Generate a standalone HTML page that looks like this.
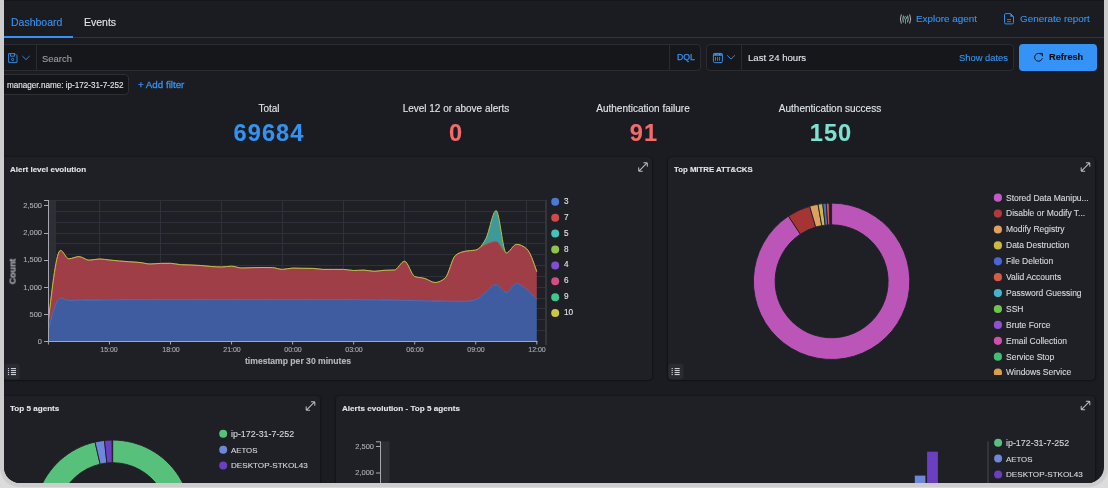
<!DOCTYPE html><html><head><meta charset="utf-8"><style>
html,body{margin:0;padding:0;}
body{width:1108px;height:488px;overflow:hidden;background:#dcdcdc;position:relative;font-family:"Liberation Sans", sans-serif;}
.t{position:absolute;white-space:nowrap;will-change:transform;-webkit-text-stroke:0.12px currentColor;}
.r{position:absolute;}
svg{position:absolute;left:0;top:0;overflow:visible;}
</style></head><body>
<div class="r" style="left:0;top:-20px;width:1108px;height:507px;background:#cdcdcd;border-radius:0 0 19px 19px;"></div>
<div style="position:absolute;left:4px;top:0;width:1100px;height:483px;background:#1b1c21;border-radius:0 0 16px 16px;overflow:hidden;">
<div style="position:absolute;left:-4px;top:0;width:1108px;height:488px;">
<div class="r" style="left:0px;top:0px;width:1108px;height:1px;background:#141519;"></div>
<div class="t" style="left:10.90px;top:17.11px;font-size:10.5px;line-height:10.5px;color:#3592f0;font-weight:400;">Dashboard</div>
<div class="t" style="left:84.00px;top:17.11px;font-size:10.5px;line-height:10.5px;color:#dfe3ea;font-weight:400;">Events</div>
<div class="r" style="left:0px;top:37px;width:1108px;height:1px;background:#34353c;"></div>
<div class="r" style="left:0px;top:36px;width:73px;height:2px;background:#3592f0;"></div>
<svg width="1108" height="488" viewBox="0 0 1108 488">
<g fill="none" stroke-linecap="round">
<path d="M901.2,14.8 Q899.3,19 901.2,23.2 M903.3,16 Q902.2,19 903.3,22 M909.8,14.8 Q911.7,19 909.8,23.2 M907.7,16 Q908.8,19 907.7,22" stroke="#c0c3ca" stroke-width="0.9"/>
<circle cx="905.5" cy="17.9" r="1.3" stroke="#54b399" stroke-width="0.9"/>
<path d="M905.5,19.3 V23.4" stroke="#54b399" stroke-width="0.9"/>
</g>
<g fill="none" stroke="#3592f0" stroke-width="0.95" stroke-linejoin="round">
<path d="M1005.8,13.6 H1010.6 L1013.5,16.5 V22.6 Q1013.5,23.9 1012.2,23.9 H1005.8 Q1004.5,23.9 1004.5,22.6 V14.9 Q1004.5,13.6 1005.8,13.6 Z"/>
</g>
<path d="M1010.4,13.3 L1013.8,16.7 H1010.4 Z" fill="#3592f0"/>
<path d="M1007,19.5 H1011 M1007,21.6 H1011" stroke="#3592f0" stroke-width="0.8"/>
</svg>
<div class="t" style="left:916.20px;top:14.42px;font-size:9.9px;line-height:9.9px;color:#3592f0;font-weight:400;">Explore agent</div>
<div class="t" style="left:1020.00px;top:14.42px;font-size:9.9px;line-height:9.9px;color:#3592f0;font-weight:400;">Generate report</div>
<div class="r" style="left:-6px;top:44px;width:707px;height:27px;background:#16171b;border:1px solid #2b2c32;border-radius:4px;box-sizing:border-box;"></div>
<div class="r" style="left:36px;top:45px;width:1px;height:25px;background:#2b2c32;"></div>
<div class="r" style="left:669px;top:45px;width:1px;height:25px;background:#2b2c32;"></div>
<div class="r" style="left:706px;top:44px;width:308px;height:27px;background:#16171b;border:1px solid #2b2c32;border-radius:4px;box-sizing:border-box;"></div>
<div class="r" style="left:741px;top:45px;width:1px;height:25px;background:#2b2c32;"></div>
<svg width="1108" height="488" viewBox="0 0 1108 488">
<g fill="none" stroke="#3592f0" stroke-width="0.9" stroke-linejoin="round">
<path d="M8.6,53.6 H15 L17,55.6 V62.4 H8.6 Z"/>
<path d="M10.6,53.6 V56.2 H14.4 V53.6"/>
<circle cx="12.6" cy="59.4" r="1.1"/>
<path d="M22.3,56 L26,59.6 L29.7,56"/>
</g>
<g fill="none" stroke="#3592f0" stroke-width="0.95" stroke-linecap="round" stroke-linejoin="round">
<path d="M727.4,55.6 L731,59.1 L734.6,55.6"/>
</g>
<rect x="713.4" y="53.4" width="9" height="9.2" rx="1.3" fill="none" stroke="#3592f0" stroke-width="0.95"/>
<rect x="713.4" y="53.4" width="9" height="2.6" fill="#3592f0" opacity="0.75"/>
<circle cx="715.7" cy="54.4" r="0.7" fill="#5aa8f5"/><circle cx="719.6" cy="54.4" r="0.7" fill="#5aa8f5"/>
<path d="M715.5,57.3 V60.4 M717.6,57.3 V60.4 M719.6,57.3 V60.4" stroke="#3592f0" stroke-width="0.85" stroke-linecap="round"/>
</svg>
<div class="t" style="left:41.90px;top:54.20px;font-size:9.45px;line-height:9.45px;color:#9a9da5;font-weight:400;">Search</div>
<div class="t" style="left:676.90px;top:53.24px;font-size:8.7px;line-height:8.7px;color:#3592f0;font-weight:400;-webkit-text-stroke:0.25px #3592f0;">DQL</div>
<div class="t" style="left:747.50px;top:52.87px;font-size:9.6px;line-height:9.6px;color:#dfe3ea;font-weight:400;">Last 24 hours</div>
<div class="t" style="left:958.70px;top:53.04px;font-size:9.4px;line-height:9.4px;color:#3592f0;font-weight:400;">Show dates</div>
<div class="r" style="left:1019px;top:44px;width:78px;height:27px;background:#3592f7;border-radius:4px;"></div>
<svg width="1108" height="488" viewBox="0 0 1108 488">
<path d="M1041.6,54.9 A3.9,3.9 0 1 0 1042.3,58.3" fill="none" stroke="#0f1013" stroke-width="0.95"/>
<path d="M1039.9,53.4 L1042.4,53.4 L1042.4,55.9" fill="none" stroke="#0f1013" stroke-width="0.95" stroke-linecap="round" stroke-linejoin="round"/>
</svg>
<div class="t" style="left:1049.30px;top:53.21px;font-size:9.2px;line-height:9.2px;color:#0f1013;font-weight:700;">Refresh</div>
<div class="r" style="left:-10px;top:74px;width:139px;height:21px;background:#141519;border:1px solid #2e2f35;border-radius:4px;box-sizing:border-box;"></div>
<div class="t" style="left:6.90px;top:81.90px;font-size:8.15px;line-height:8.15px;color:#e2e4e8;font-weight:400;">manager.name: ip-172-31-7-252</div>
<div class="t" style="left:137.90px;top:80.05px;font-size:9.75px;line-height:9.75px;color:#3592f0;font-weight:400;-webkit-text-stroke:0.3px #3592f0;">+ Add filter</div>
<div class="t" style="left:-31.30px;width:600px;text-align:center;top:104.13px;font-size:10.0px;line-height:10.0px;color:#dfe3ea;font-weight:400;">Total</div>
<div class="t" style="left:-30.75px;width:600px;text-align:center;top:121.62px;font-size:23.6px;line-height:23.6px;color:#3592f0;font-weight:700;letter-spacing:1.1px;">69684</div>
<div class="t" style="left:155.70px;width:600px;text-align:center;top:104.13px;font-size:10.0px;line-height:10.0px;color:#dfe3ea;font-weight:400;">Level 12 or above alerts</div>
<div class="t" style="left:156.25px;width:600px;text-align:center;top:121.62px;font-size:23.6px;line-height:23.6px;color:#f46b6b;font-weight:700;letter-spacing:1.1px;">0</div>
<div class="t" style="left:343.00px;width:600px;text-align:center;top:104.13px;font-size:10.0px;line-height:10.0px;color:#dfe3ea;font-weight:400;">Authentication failure</div>
<div class="t" style="left:343.55px;width:600px;text-align:center;top:121.62px;font-size:23.6px;line-height:23.6px;color:#f46b6b;font-weight:700;letter-spacing:1.1px;">91</div>
<div class="t" style="left:530.00px;width:600px;text-align:center;top:104.13px;font-size:10.0px;line-height:10.0px;color:#dfe3ea;font-weight:400;">Authentication success</div>
<div class="t" style="left:530.55px;width:600px;text-align:center;top:121.62px;font-size:23.6px;line-height:23.6px;color:#7de2d1;font-weight:700;letter-spacing:1.1px;">150</div>
<div class="r" style="left:-8px;top:157px;width:660px;height:222.5px;background:#1f2026;border-radius:4px;box-shadow:0 1px 2px rgba(0,0,0,0.25), 1px 0 2px rgba(0,0,0,0.3), -1px 0 2px rgba(0,0,0,0.3);"></div>
<div class="r" style="left:668px;top:157px;width:427px;height:222.5px;background:#1f2026;border-radius:4px;box-shadow:0 1px 2px rgba(0,0,0,0.25), 1px 0 2px rgba(0,0,0,0.3), -1px 0 2px rgba(0,0,0,0.3);"></div>
<div class="r" style="left:-8px;top:396px;width:328px;height:120px;background:#1f2026;border-radius:4px;box-shadow:0 1px 2px rgba(0,0,0,0.25), 1px 0 2px rgba(0,0,0,0.3), -1px 0 2px rgba(0,0,0,0.3);"></div>
<div class="r" style="left:336px;top:396px;width:759px;height:120px;background:#1f2026;border-radius:4px;box-shadow:0 1px 2px rgba(0,0,0,0.25), 1px 0 2px rgba(0,0,0,0.3), -1px 0 2px rgba(0,0,0,0.3);"></div>
<div class="t" style="left:9.60px;top:166.23px;font-size:8px;line-height:8px;color:#dfe3ea;font-weight:700;">Alert level evolution</div>
<div class="t" style="left:674.00px;top:166.40px;font-size:7.8px;line-height:7.8px;color:#dfe3ea;font-weight:700;">Top MITRE ATT&amp;CKS</div>
<div class="t" style="left:9.70px;top:405.24px;font-size:8.1px;line-height:8.1px;color:#dfe3ea;font-weight:700;">Top 5 agents</div>
<div class="t" style="left:341.70px;top:404.93px;font-size:8.12px;line-height:8.12px;color:#dfe3ea;font-weight:700;">Alerts evolution - Top 5 agents</div>
<svg width="1108" height="488" viewBox="0 0 1108 488"><path d="M639.2,170.8 L646.8,163.2 M643.8,162.7 H646.5 Q647.3,162.7 647.3,163.5 V166.2 M638.7,167.8 V170.5 Q638.7,171.3 639.5,171.3 H642.2" fill="none" stroke="#b8bbc2" stroke-width="1.05" stroke-linecap="round"/><path d="M1081.7,170.8 L1089.3,163.2 M1086.3,162.7 H1089.0 Q1089.8,162.7 1089.8,163.5 V166.2 M1081.2,167.8 V170.5 Q1081.2,171.3 1082.0,171.3 H1084.7" fill="none" stroke="#b8bbc2" stroke-width="1.05" stroke-linecap="round"/><path d="M306.7,409.8 L314.3,402.2 M311.3,401.7 H314.0 Q314.8,401.7 314.8,402.5 V405.2 M306.2,406.8 V409.5 Q306.2,410.3 307.0,410.3 H309.7" fill="none" stroke="#b8bbc2" stroke-width="1.05" stroke-linecap="round"/><path d="M1081.7,409.3 L1089.3,401.7 M1086.3,401.2 H1089.0 Q1089.8,401.2 1089.8,402.0 V404.7 M1081.2,406.3 V409.0 Q1081.2,409.8 1082.0,409.8 H1084.7" fill="none" stroke="#b8bbc2" stroke-width="1.05" stroke-linecap="round"/><rect x="4.7" y="363.8" width="15" height="15.5" rx="3" fill="#2a2b31"/><rect x="7.9" y="368.00" width="1.2" height="1.1" fill="#c9ccd2"/><rect x="10.9" y="368.00" width="5.1" height="1.1" fill="#c9ccd2"/><rect x="7.9" y="370.00" width="1.2" height="1.1" fill="#c9ccd2"/><rect x="10.9" y="370.00" width="5.1" height="1.1" fill="#c9ccd2"/><rect x="7.9" y="372.00" width="1.2" height="1.1" fill="#c9ccd2"/><rect x="10.9" y="372.00" width="5.1" height="1.1" fill="#c9ccd2"/><rect x="7.9" y="374.00" width="1.2" height="1.1" fill="#c9ccd2"/><rect x="10.9" y="374.00" width="5.1" height="1.1" fill="#c9ccd2"/><rect x="668.4" y="363.8" width="15" height="15.5" rx="3" fill="#2a2b31"/><rect x="671.6" y="368.00" width="1.2" height="1.1" fill="#c9ccd2"/><rect x="674.6" y="368.00" width="5.1" height="1.1" fill="#c9ccd2"/><rect x="671.6" y="370.00" width="1.2" height="1.1" fill="#c9ccd2"/><rect x="674.6" y="370.00" width="5.1" height="1.1" fill="#c9ccd2"/><rect x="671.6" y="372.00" width="1.2" height="1.1" fill="#c9ccd2"/><rect x="674.6" y="372.00" width="5.1" height="1.1" fill="#c9ccd2"/><rect x="671.6" y="374.00" width="1.2" height="1.1" fill="#c9ccd2"/><rect x="674.6" y="374.00" width="5.1" height="1.1" fill="#c9ccd2"/></svg>
<svg width="1108" height="488" viewBox="0 0 1108 488"><rect x="49" y="200" width="7" height="141.5" fill="#2e2f35"/><rect x="99" y="200" width="1" height="141.5" fill="#2e3139"/><rect x="160" y="200" width="1" height="141.5" fill="#2e3139"/><rect x="221" y="200" width="1" height="141.5" fill="#2e3139"/><rect x="282" y="200" width="1" height="141.5" fill="#2e3139"/><rect x="343" y="200" width="1" height="141.5" fill="#2e3139"/><rect x="404" y="200" width="1" height="141.5" fill="#2e3139"/><rect x="465" y="200" width="1" height="141.5" fill="#2e3139"/><rect x="526" y="200" width="1" height="141.5" fill="#2e3139"/><rect x="49" y="330" width="497" height="1" fill="#2e3139"/><rect x="49" y="319" width="497" height="1" fill="#2e3139"/><rect x="49" y="308" width="497" height="1" fill="#2e3139"/><rect x="49" y="298" width="497" height="1" fill="#2e3139"/><rect x="49" y="287" width="497" height="1" fill="#2e3139"/><rect x="49" y="276" width="497" height="1" fill="#2e3139"/><rect x="49" y="265" width="497" height="1" fill="#2e3139"/><rect x="49" y="254" width="497" height="1" fill="#2e3139"/><rect x="49" y="243" width="497" height="1" fill="#2e3139"/><rect x="49" y="233" width="497" height="1" fill="#2e3139"/><rect x="49" y="222" width="497" height="1" fill="#2e3139"/><rect x="49" y="211" width="497" height="1" fill="#2e3139"/><rect x="49" y="200" width="497" height="1" fill="#2e3139"/><path d="M48.40,329.60 C52.43,313.80 56.47,298.00 60.50,298.00 C63.25,298.00 66.00,300.60 68.75,300.60 C72.14,300.60 75.53,300.30 78.92,300.20 C82.32,300.10 85.71,300.00 89.10,300.00 C92.49,300.00 95.88,300.00 99.28,300.00 C102.67,300.00 106.06,299.85 109.45,299.80 C112.84,299.75 116.23,299.70 119.62,299.70 C123.02,299.70 126.41,299.70 129.80,299.70 C133.19,299.70 136.58,299.70 139.97,299.70 C143.37,299.70 146.76,299.60 150.15,299.60 C153.54,299.60 156.93,299.60 160.33,299.60 C163.72,299.60 167.11,299.60 170.50,299.60 C173.89,299.60 177.28,299.60 180.68,299.60 C184.07,299.60 187.46,299.60 190.85,299.60 C194.24,299.60 197.63,299.60 201.03,299.60 C204.42,299.60 207.81,299.60 211.20,299.60 C214.59,299.60 217.98,299.60 221.38,299.60 C224.77,299.60 228.16,299.60 231.55,299.60 C234.94,299.60 238.33,299.60 241.73,299.60 C245.12,299.60 248.51,299.60 251.90,299.60 C255.29,299.60 258.68,299.60 262.07,299.60 C265.47,299.60 268.86,299.60 272.25,299.60 C275.64,299.60 279.03,299.60 282.43,299.60 C285.82,299.60 289.21,299.60 292.60,299.60 C295.99,299.60 299.38,299.60 302.78,299.60 C306.17,299.60 309.56,299.60 312.95,299.60 C316.34,299.60 319.73,299.60 323.12,299.60 C326.52,299.60 329.91,299.60 333.30,299.60 C336.69,299.60 340.08,299.60 343.48,299.60 C346.87,299.60 350.26,299.60 353.65,299.60 C357.04,299.60 360.43,299.67 363.82,299.70 C367.22,299.73 370.61,299.75 374.00,299.80 C377.39,299.85 380.78,299.93 384.18,300.00 C387.57,300.07 390.96,300.13 394.35,300.20 C397.74,300.27 401.13,300.33 404.52,300.40 C407.92,300.47 411.31,300.53 414.70,300.60 C418.09,300.67 421.48,300.73 424.88,300.80 C428.27,300.87 431.66,300.93 435.05,301.00 C438.44,301.07 441.83,301.15 445.23,301.20 C448.62,301.25 452.01,301.30 455.40,301.30 C458.79,301.30 462.18,301.30 465.57,301.30 C468.97,301.30 472.36,300.80 475.75,299.80 C479.14,298.80 482.53,294.55 485.93,292.00 C489.32,289.45 492.71,284.50 496.10,284.50 C499.49,284.50 502.88,292.50 506.28,292.50 C509.67,292.50 513.06,283.50 516.45,283.50 C519.84,283.50 523.23,286.87 526.62,289.50 C530.02,292.13 533.41,295.72 536.80,299.30 L536.80,341.50 C533.41,341.50 530.02,341.50 526.62,341.50 C523.23,341.50 519.84,341.50 516.45,341.50 C513.06,341.50 509.67,341.50 506.28,341.50 C502.88,341.50 499.49,341.50 496.10,341.50 C492.71,341.50 489.32,341.50 485.93,341.50 C482.53,341.50 479.14,341.50 475.75,341.50 C472.36,341.50 468.97,341.50 465.57,341.50 C462.18,341.50 458.79,341.50 455.40,341.50 C452.01,341.50 448.62,341.50 445.23,341.50 C441.83,341.50 438.44,341.50 435.05,341.50 C431.66,341.50 428.27,341.50 424.88,341.50 C421.48,341.50 418.09,341.50 414.70,341.50 C411.31,341.50 407.92,341.50 404.52,341.50 C401.13,341.50 397.74,341.50 394.35,341.50 C390.96,341.50 387.57,341.50 384.18,341.50 C380.78,341.50 377.39,341.50 374.00,341.50 C370.61,341.50 367.22,341.50 363.82,341.50 C360.43,341.50 357.04,341.50 353.65,341.50 C350.26,341.50 346.87,341.50 343.48,341.50 C340.08,341.50 336.69,341.50 333.30,341.50 C329.91,341.50 326.52,341.50 323.12,341.50 C319.73,341.50 316.34,341.50 312.95,341.50 C309.56,341.50 306.17,341.50 302.78,341.50 C299.38,341.50 295.99,341.50 292.60,341.50 C289.21,341.50 285.82,341.50 282.43,341.50 C279.03,341.50 275.64,341.50 272.25,341.50 C268.86,341.50 265.47,341.50 262.07,341.50 C258.68,341.50 255.29,341.50 251.90,341.50 C248.51,341.50 245.12,341.50 241.73,341.50 C238.33,341.50 234.94,341.50 231.55,341.50 C228.16,341.50 224.77,341.50 221.38,341.50 C217.98,341.50 214.59,341.50 211.20,341.50 C207.81,341.50 204.42,341.50 201.03,341.50 C197.63,341.50 194.24,341.50 190.85,341.50 C187.46,341.50 184.07,341.50 180.68,341.50 C177.28,341.50 173.89,341.50 170.50,341.50 C167.11,341.50 163.72,341.50 160.33,341.50 C156.93,341.50 153.54,341.50 150.15,341.50 C146.76,341.50 143.37,341.50 139.97,341.50 C136.58,341.50 133.19,341.50 129.80,341.50 C126.41,341.50 123.02,341.50 119.62,341.50 C116.23,341.50 112.84,341.50 109.45,341.50 C106.06,341.50 102.67,341.50 99.28,341.50 C95.88,341.50 92.49,341.50 89.10,341.50 C85.71,341.50 82.32,341.50 78.92,341.50 C75.53,341.50 72.14,341.50 68.75,341.50 C66.00,341.50 63.25,341.50 60.50,341.50 C56.47,341.50 52.43,341.50 48.40,341.50 Z" fill="#3e5c9f"/><path d="M48.40,321.00 C52.43,285.70 56.47,250.40 60.50,250.40 C63.25,250.40 66.00,258.80 68.75,258.80 C72.14,258.80 75.53,256.60 78.92,256.60 C82.32,256.60 85.71,260.20 89.10,260.20 C92.49,260.20 95.88,259.00 99.28,259.00 C102.67,259.00 106.06,259.67 109.45,260.00 C112.84,260.33 116.23,260.70 119.62,261.00 C123.02,261.30 126.41,261.55 129.80,261.80 C133.19,262.05 136.58,262.13 139.97,262.50 C143.37,262.87 146.76,264.00 150.15,264.00 C153.54,264.00 156.93,263.47 160.33,263.40 C163.72,263.33 167.11,263.30 170.50,263.30 C173.89,263.30 177.28,264.50 180.68,264.70 C184.07,264.90 187.46,264.87 190.85,265.00 C194.24,265.13 197.63,265.25 201.03,265.50 C204.42,265.75 207.81,266.25 211.20,266.50 C214.59,266.75 217.98,267.00 221.38,267.00 C224.77,267.00 228.16,266.20 231.55,266.20 C234.94,266.20 238.33,268.00 241.73,268.00 C245.12,268.00 248.51,267.78 251.90,267.70 C255.29,267.62 258.68,267.50 262.07,267.50 C265.47,267.50 268.86,267.53 272.25,267.60 C275.64,267.67 279.03,269.40 282.43,269.40 C285.82,269.40 289.21,268.10 292.60,268.10 C295.99,268.10 299.38,268.25 302.78,268.30 C306.17,268.35 309.56,268.33 312.95,268.40 C316.34,268.47 319.73,269.40 323.12,269.40 C326.52,269.40 329.91,269.40 333.30,269.40 C336.69,269.40 340.08,269.40 343.48,269.40 C346.87,269.40 350.26,270.50 353.65,270.50 C357.04,270.50 360.43,270.10 363.82,270.10 C367.22,270.10 370.61,271.30 374.00,271.30 C377.39,271.30 380.78,270.50 384.18,270.30 C387.57,270.10 390.96,270.20 394.35,270.00 C397.74,269.80 401.13,262.00 404.52,262.00 C407.92,262.00 411.31,275.17 414.70,276.50 C418.09,277.83 421.48,277.50 424.88,278.50 C428.27,279.50 431.66,282.50 435.05,282.50 C438.44,282.50 441.83,281.00 445.23,278.00 C448.62,275.00 452.01,258.37 455.40,255.50 C458.79,252.63 462.18,251.80 465.57,251.20 C468.97,250.60 472.36,250.90 475.75,250.30 C479.14,249.70 482.53,245.97 485.93,244.50 C489.32,243.03 492.71,241.50 496.10,241.50 C499.49,241.50 502.88,253.00 506.28,253.00 C509.67,253.00 513.06,244.40 516.45,244.40 C519.84,244.40 523.23,245.87 526.62,248.80 C530.02,251.73 533.41,261.72 536.80,271.70 L536.80,299.30 C533.41,295.72 530.02,292.13 526.62,289.50 C523.23,286.87 519.84,283.50 516.45,283.50 C513.06,283.50 509.67,292.50 506.28,292.50 C502.88,292.50 499.49,284.50 496.10,284.50 C492.71,284.50 489.32,289.45 485.93,292.00 C482.53,294.55 479.14,298.80 475.75,299.80 C472.36,300.80 468.97,301.30 465.57,301.30 C462.18,301.30 458.79,301.30 455.40,301.30 C452.01,301.30 448.62,301.25 445.23,301.20 C441.83,301.15 438.44,301.07 435.05,301.00 C431.66,300.93 428.27,300.87 424.88,300.80 C421.48,300.73 418.09,300.67 414.70,300.60 C411.31,300.53 407.92,300.47 404.52,300.40 C401.13,300.33 397.74,300.27 394.35,300.20 C390.96,300.13 387.57,300.07 384.18,300.00 C380.78,299.93 377.39,299.85 374.00,299.80 C370.61,299.75 367.22,299.73 363.82,299.70 C360.43,299.67 357.04,299.60 353.65,299.60 C350.26,299.60 346.87,299.60 343.48,299.60 C340.08,299.60 336.69,299.60 333.30,299.60 C329.91,299.60 326.52,299.60 323.12,299.60 C319.73,299.60 316.34,299.60 312.95,299.60 C309.56,299.60 306.17,299.60 302.78,299.60 C299.38,299.60 295.99,299.60 292.60,299.60 C289.21,299.60 285.82,299.60 282.43,299.60 C279.03,299.60 275.64,299.60 272.25,299.60 C268.86,299.60 265.47,299.60 262.07,299.60 C258.68,299.60 255.29,299.60 251.90,299.60 C248.51,299.60 245.12,299.60 241.73,299.60 C238.33,299.60 234.94,299.60 231.55,299.60 C228.16,299.60 224.77,299.60 221.38,299.60 C217.98,299.60 214.59,299.60 211.20,299.60 C207.81,299.60 204.42,299.60 201.03,299.60 C197.63,299.60 194.24,299.60 190.85,299.60 C187.46,299.60 184.07,299.60 180.68,299.60 C177.28,299.60 173.89,299.60 170.50,299.60 C167.11,299.60 163.72,299.60 160.33,299.60 C156.93,299.60 153.54,299.60 150.15,299.60 C146.76,299.60 143.37,299.70 139.97,299.70 C136.58,299.70 133.19,299.70 129.80,299.70 C126.41,299.70 123.02,299.70 119.62,299.70 C116.23,299.70 112.84,299.75 109.45,299.80 C106.06,299.85 102.67,300.00 99.28,300.00 C95.88,300.00 92.49,300.00 89.10,300.00 C85.71,300.00 82.32,300.10 78.92,300.20 C75.53,300.30 72.14,300.60 68.75,300.60 C66.00,300.60 63.25,298.00 60.50,298.00 C56.47,298.00 52.43,313.80 48.40,329.60 Z" fill="#a03e47"/><path d="M48.40,321.00 C52.43,285.70 56.47,250.40 60.50,250.40 C63.25,250.40 66.00,258.80 68.75,258.80 C72.14,258.80 75.53,256.60 78.92,256.60 C82.32,256.60 85.71,260.20 89.10,260.20 C92.49,260.20 95.88,259.00 99.28,259.00 C102.67,259.00 106.06,259.67 109.45,260.00 C112.84,260.33 116.23,260.70 119.62,261.00 C123.02,261.30 126.41,261.55 129.80,261.80 C133.19,262.05 136.58,262.13 139.97,262.50 C143.37,262.87 146.76,264.00 150.15,264.00 C153.54,264.00 156.93,263.47 160.33,263.40 C163.72,263.33 167.11,263.30 170.50,263.30 C173.89,263.30 177.28,264.50 180.68,264.70 C184.07,264.90 187.46,264.87 190.85,265.00 C194.24,265.13 197.63,265.25 201.03,265.50 C204.42,265.75 207.81,266.25 211.20,266.50 C214.59,266.75 217.98,267.00 221.38,267.00 C224.77,267.00 228.16,266.20 231.55,266.20 C234.94,266.20 238.33,268.00 241.73,268.00 C245.12,268.00 248.51,267.78 251.90,267.70 C255.29,267.62 258.68,267.50 262.07,267.50 C265.47,267.50 268.86,267.53 272.25,267.60 C275.64,267.67 279.03,269.40 282.43,269.40 C285.82,269.40 289.21,268.10 292.60,268.10 C295.99,268.10 299.38,268.25 302.78,268.30 C306.17,268.35 309.56,268.33 312.95,268.40 C316.34,268.47 319.73,269.40 323.12,269.40 C326.52,269.40 329.91,269.40 333.30,269.40 C336.69,269.40 340.08,269.40 343.48,269.40 C346.87,269.40 350.26,270.50 353.65,270.50 C357.04,270.50 360.43,270.10 363.82,270.10 C367.22,270.10 370.61,271.30 374.00,271.30 C377.39,271.30 380.78,270.50 384.18,270.30 C387.57,270.10 390.96,270.20 394.35,270.00 C397.74,269.80 401.13,261.20 404.52,261.20 C407.92,261.20 411.31,275.17 414.70,276.50 C418.09,277.83 421.48,277.50 424.88,278.50 C428.27,279.50 431.66,282.50 435.05,282.50 C438.44,282.50 441.83,281.00 445.23,278.00 C448.62,275.00 452.01,258.37 455.40,255.50 C458.79,252.63 462.18,252.00 465.57,251.20 C468.97,250.40 472.36,250.80 475.75,250.00 C479.14,249.20 482.53,245.07 485.93,238.50 C489.32,231.93 492.71,210.60 496.10,210.60 C499.49,210.60 502.88,253.00 506.28,253.00 C509.67,253.00 513.06,244.40 516.45,244.40 C519.84,244.40 523.23,245.87 526.62,248.80 C530.02,251.73 533.41,261.72 536.80,271.70 L536.80,271.70 C533.41,261.72 530.02,251.73 526.62,248.80 C523.23,245.87 519.84,244.40 516.45,244.40 C513.06,244.40 509.67,253.00 506.28,253.00 C502.88,253.00 499.49,241.50 496.10,241.50 C492.71,241.50 489.32,243.03 485.93,244.50 C482.53,245.97 479.14,249.70 475.75,250.30 C472.36,250.90 468.97,250.60 465.57,251.20 C462.18,251.80 458.79,252.63 455.40,255.50 C452.01,258.37 448.62,275.00 445.23,278.00 C441.83,281.00 438.44,282.50 435.05,282.50 C431.66,282.50 428.27,279.50 424.88,278.50 C421.48,277.50 418.09,277.83 414.70,276.50 C411.31,275.17 407.92,262.00 404.52,262.00 C401.13,262.00 397.74,269.80 394.35,270.00 C390.96,270.20 387.57,270.10 384.18,270.30 C380.78,270.50 377.39,271.30 374.00,271.30 C370.61,271.30 367.22,270.10 363.82,270.10 C360.43,270.10 357.04,270.50 353.65,270.50 C350.26,270.50 346.87,269.40 343.48,269.40 C340.08,269.40 336.69,269.40 333.30,269.40 C329.91,269.40 326.52,269.40 323.12,269.40 C319.73,269.40 316.34,268.47 312.95,268.40 C309.56,268.33 306.17,268.35 302.78,268.30 C299.38,268.25 295.99,268.10 292.60,268.10 C289.21,268.10 285.82,269.40 282.43,269.40 C279.03,269.40 275.64,267.67 272.25,267.60 C268.86,267.53 265.47,267.50 262.07,267.50 C258.68,267.50 255.29,267.62 251.90,267.70 C248.51,267.78 245.12,268.00 241.73,268.00 C238.33,268.00 234.94,266.20 231.55,266.20 C228.16,266.20 224.77,267.00 221.38,267.00 C217.98,267.00 214.59,266.75 211.20,266.50 C207.81,266.25 204.42,265.75 201.03,265.50 C197.63,265.25 194.24,265.13 190.85,265.00 C187.46,264.87 184.07,264.90 180.68,264.70 C177.28,264.50 173.89,263.30 170.50,263.30 C167.11,263.30 163.72,263.33 160.33,263.40 C156.93,263.47 153.54,264.00 150.15,264.00 C146.76,264.00 143.37,262.87 139.97,262.50 C136.58,262.13 133.19,262.05 129.80,261.80 C126.41,261.55 123.02,261.30 119.62,261.00 C116.23,260.70 112.84,260.33 109.45,260.00 C106.06,259.67 102.67,259.00 99.28,259.00 C95.88,259.00 92.49,260.20 89.10,260.20 C85.71,260.20 82.32,256.60 78.92,256.60 C75.53,256.60 72.14,258.80 68.75,258.80 C66.00,258.80 63.25,250.40 60.50,250.40 C56.47,250.40 52.43,285.70 48.40,321.00 Z" fill="#3f9a97"/><path d="M48.40,329.60 C52.43,313.80 56.47,298.00 60.50,298.00 C63.25,298.00 66.00,300.60 68.75,300.60 C72.14,300.60 75.53,300.30 78.92,300.20 C82.32,300.10 85.71,300.00 89.10,300.00 C92.49,300.00 95.88,300.00 99.28,300.00 C102.67,300.00 106.06,299.85 109.45,299.80 C112.84,299.75 116.23,299.70 119.62,299.70 C123.02,299.70 126.41,299.70 129.80,299.70 C133.19,299.70 136.58,299.70 139.97,299.70 C143.37,299.70 146.76,299.60 150.15,299.60 C153.54,299.60 156.93,299.60 160.33,299.60 C163.72,299.60 167.11,299.60 170.50,299.60 C173.89,299.60 177.28,299.60 180.68,299.60 C184.07,299.60 187.46,299.60 190.85,299.60 C194.24,299.60 197.63,299.60 201.03,299.60 C204.42,299.60 207.81,299.60 211.20,299.60 C214.59,299.60 217.98,299.60 221.38,299.60 C224.77,299.60 228.16,299.60 231.55,299.60 C234.94,299.60 238.33,299.60 241.73,299.60 C245.12,299.60 248.51,299.60 251.90,299.60 C255.29,299.60 258.68,299.60 262.07,299.60 C265.47,299.60 268.86,299.60 272.25,299.60 C275.64,299.60 279.03,299.60 282.43,299.60 C285.82,299.60 289.21,299.60 292.60,299.60 C295.99,299.60 299.38,299.60 302.78,299.60 C306.17,299.60 309.56,299.60 312.95,299.60 C316.34,299.60 319.73,299.60 323.12,299.60 C326.52,299.60 329.91,299.60 333.30,299.60 C336.69,299.60 340.08,299.60 343.48,299.60 C346.87,299.60 350.26,299.60 353.65,299.60 C357.04,299.60 360.43,299.67 363.82,299.70 C367.22,299.73 370.61,299.75 374.00,299.80 C377.39,299.85 380.78,299.93 384.18,300.00 C387.57,300.07 390.96,300.13 394.35,300.20 C397.74,300.27 401.13,300.33 404.52,300.40 C407.92,300.47 411.31,300.53 414.70,300.60 C418.09,300.67 421.48,300.73 424.88,300.80 C428.27,300.87 431.66,300.93 435.05,301.00 C438.44,301.07 441.83,301.15 445.23,301.20 C448.62,301.25 452.01,301.30 455.40,301.30 C458.79,301.30 462.18,301.30 465.57,301.30 C468.97,301.30 472.36,300.80 475.75,299.80 C479.14,298.80 482.53,294.55 485.93,292.00 C489.32,289.45 492.71,284.50 496.10,284.50 C499.49,284.50 502.88,292.50 506.28,292.50 C509.67,292.50 513.06,283.50 516.45,283.50 C519.84,283.50 523.23,286.87 526.62,289.50 C530.02,292.13 533.41,295.72 536.80,299.30" fill="none" stroke="#4a78d4" stroke-width="0.8"/><path d="M48.40,321.00 C52.43,285.70 56.47,250.40 60.50,250.40 C63.25,250.40 66.00,258.80 68.75,258.80 C72.14,258.80 75.53,256.60 78.92,256.60 C82.32,256.60 85.71,260.20 89.10,260.20 C92.49,260.20 95.88,259.00 99.28,259.00 C102.67,259.00 106.06,259.67 109.45,260.00 C112.84,260.33 116.23,260.70 119.62,261.00 C123.02,261.30 126.41,261.55 129.80,261.80 C133.19,262.05 136.58,262.13 139.97,262.50 C143.37,262.87 146.76,264.00 150.15,264.00 C153.54,264.00 156.93,263.47 160.33,263.40 C163.72,263.33 167.11,263.30 170.50,263.30 C173.89,263.30 177.28,264.50 180.68,264.70 C184.07,264.90 187.46,264.87 190.85,265.00 C194.24,265.13 197.63,265.25 201.03,265.50 C204.42,265.75 207.81,266.25 211.20,266.50 C214.59,266.75 217.98,267.00 221.38,267.00 C224.77,267.00 228.16,266.20 231.55,266.20 C234.94,266.20 238.33,268.00 241.73,268.00 C245.12,268.00 248.51,267.78 251.90,267.70 C255.29,267.62 258.68,267.50 262.07,267.50 C265.47,267.50 268.86,267.53 272.25,267.60 C275.64,267.67 279.03,269.40 282.43,269.40 C285.82,269.40 289.21,268.10 292.60,268.10 C295.99,268.10 299.38,268.25 302.78,268.30 C306.17,268.35 309.56,268.33 312.95,268.40 C316.34,268.47 319.73,269.40 323.12,269.40 C326.52,269.40 329.91,269.40 333.30,269.40 C336.69,269.40 340.08,269.40 343.48,269.40 C346.87,269.40 350.26,270.50 353.65,270.50 C357.04,270.50 360.43,270.10 363.82,270.10 C367.22,270.10 370.61,271.30 374.00,271.30 C377.39,271.30 380.78,270.50 384.18,270.30 C387.57,270.10 390.96,270.20 394.35,270.00 C397.74,269.80 401.13,262.00 404.52,262.00 C407.92,262.00 411.31,275.17 414.70,276.50 C418.09,277.83 421.48,277.50 424.88,278.50 C428.27,279.50 431.66,282.50 435.05,282.50 C438.44,282.50 441.83,281.00 445.23,278.00 C448.62,275.00 452.01,258.37 455.40,255.50 C458.79,252.63 462.18,251.80 465.57,251.20 C468.97,250.60 472.36,250.90 475.75,250.30 C479.14,249.70 482.53,245.97 485.93,244.50 C489.32,243.03 492.71,241.50 496.10,241.50 C499.49,241.50 502.88,253.00 506.28,253.00 C509.67,253.00 513.06,244.40 516.45,244.40 C519.84,244.40 523.23,245.87 526.62,248.80 C530.02,251.73 533.41,261.72 536.80,271.70" fill="none" stroke="#cf4a4a" stroke-width="0.8"/><path d="M48.40,321.00 C52.43,285.70 56.47,250.40 60.50,250.40 C63.25,250.40 66.00,258.80 68.75,258.80 C72.14,258.80 75.53,256.60 78.92,256.60 C82.32,256.60 85.71,260.20 89.10,260.20 C92.49,260.20 95.88,259.00 99.28,259.00 C102.67,259.00 106.06,259.67 109.45,260.00 C112.84,260.33 116.23,260.70 119.62,261.00 C123.02,261.30 126.41,261.55 129.80,261.80 C133.19,262.05 136.58,262.13 139.97,262.50 C143.37,262.87 146.76,264.00 150.15,264.00 C153.54,264.00 156.93,263.47 160.33,263.40 C163.72,263.33 167.11,263.30 170.50,263.30 C173.89,263.30 177.28,264.50 180.68,264.70 C184.07,264.90 187.46,264.87 190.85,265.00 C194.24,265.13 197.63,265.25 201.03,265.50 C204.42,265.75 207.81,266.25 211.20,266.50 C214.59,266.75 217.98,267.00 221.38,267.00 C224.77,267.00 228.16,266.20 231.55,266.20 C234.94,266.20 238.33,268.00 241.73,268.00 C245.12,268.00 248.51,267.78 251.90,267.70 C255.29,267.62 258.68,267.50 262.07,267.50 C265.47,267.50 268.86,267.53 272.25,267.60 C275.64,267.67 279.03,269.40 282.43,269.40 C285.82,269.40 289.21,268.10 292.60,268.10 C295.99,268.10 299.38,268.25 302.78,268.30 C306.17,268.35 309.56,268.33 312.95,268.40 C316.34,268.47 319.73,269.40 323.12,269.40 C326.52,269.40 329.91,269.40 333.30,269.40 C336.69,269.40 340.08,269.40 343.48,269.40 C346.87,269.40 350.26,270.50 353.65,270.50 C357.04,270.50 360.43,270.10 363.82,270.10 C367.22,270.10 370.61,271.30 374.00,271.30 C377.39,271.30 380.78,270.50 384.18,270.30 C387.57,270.10 390.96,270.20 394.35,270.00 C397.74,269.80 401.13,261.20 404.52,261.20 C407.92,261.20 411.31,275.17 414.70,276.50 C418.09,277.83 421.48,277.50 424.88,278.50 C428.27,279.50 431.66,282.50 435.05,282.50 C438.44,282.50 441.83,281.00 445.23,278.00 C448.62,275.00 452.01,258.37 455.40,255.50 C458.79,252.63 462.18,252.00 465.57,251.20 C468.97,250.40 472.36,250.80 475.75,250.00 C479.14,249.20 482.53,245.07 485.93,238.50 C489.32,231.93 492.71,210.60 496.10,210.60 C499.49,210.60 502.88,253.00 506.28,253.00 C509.67,253.00 513.06,244.40 516.45,244.40 C519.84,244.40 523.23,245.87 526.62,248.80 C530.02,251.73 533.41,261.72 536.80,271.70" fill="none" stroke="#b5c04a" stroke-width="1"/><rect x="48" y="200" width="1" height="142" fill="#a5a8b0"/><rect x="44" y="200" width="4.5" height="1" fill="#a5a8b0"/><rect x="48" y="341" width="489.5" height="1" fill="#a5a8b0"/><rect x="44" y="341" width="4" height="1" fill="#a5a8b0"/><rect x="44" y="314" width="4" height="1" fill="#a5a8b0"/><rect x="44" y="287" width="4" height="1" fill="#a5a8b0"/><rect x="44" y="260" width="4" height="1" fill="#a5a8b0"/><rect x="44" y="233" width="4" height="1" fill="#a5a8b0"/><rect x="44" y="205" width="4" height="1" fill="#a5a8b0"/><rect x="47.90" y="341" width="1" height="3.5" fill="#a5a8b0"/><rect x="108.95" y="341" width="1" height="3.5" fill="#a5a8b0"/><rect x="170.00" y="341" width="1" height="3.5" fill="#a5a8b0"/><rect x="231.05" y="341" width="1" height="3.5" fill="#a5a8b0"/><rect x="292.10" y="341" width="1" height="3.5" fill="#a5a8b0"/><rect x="353.15" y="341" width="1" height="3.5" fill="#a5a8b0"/><rect x="414.20" y="341" width="1" height="3.5" fill="#a5a8b0"/><rect x="475.25" y="341" width="1" height="3.5" fill="#a5a8b0"/><rect x="536.30" y="341" width="1" height="3.5" fill="#a5a8b0"/><rect x="545" y="200" width="2" height="145" fill="#34353b"/></svg>
<div class="t" style="left:-558.00px;width:600px;text-align:right;top:202.18px;font-size:7.5px;line-height:7.5px;color:#a9acb4;font-weight:400;">2,500</div>
<div class="t" style="left:-558.00px;width:600px;text-align:right;top:229.29px;font-size:7.5px;line-height:7.5px;color:#a9acb4;font-weight:400;">2,000</div>
<div class="t" style="left:-558.00px;width:600px;text-align:right;top:256.41px;font-size:7.5px;line-height:7.5px;color:#a9acb4;font-weight:400;">1,500</div>
<div class="t" style="left:-558.00px;width:600px;text-align:right;top:283.52px;font-size:7.5px;line-height:7.5px;color:#a9acb4;font-weight:400;">1,000</div>
<div class="t" style="left:-558.00px;width:600px;text-align:right;top:310.64px;font-size:7.5px;line-height:7.5px;color:#a9acb4;font-weight:400;">500</div>
<div class="t" style="left:-558.00px;width:600px;text-align:right;top:337.75px;font-size:7.5px;line-height:7.5px;color:#a9acb4;font-weight:400;">0</div>
<div class="t" style="left:-190.55px;width:600px;text-align:center;top:346.27px;font-size:7px;line-height:7px;color:#a9acb4;font-weight:400;">15:00</div>
<div class="t" style="left:-129.50px;width:600px;text-align:center;top:346.27px;font-size:7px;line-height:7px;color:#a9acb4;font-weight:400;">18:00</div>
<div class="t" style="left:-68.45px;width:600px;text-align:center;top:346.27px;font-size:7px;line-height:7px;color:#a9acb4;font-weight:400;">21:00</div>
<div class="t" style="left:-7.40px;width:600px;text-align:center;top:346.27px;font-size:7px;line-height:7px;color:#a9acb4;font-weight:400;">00:00</div>
<div class="t" style="left:53.65px;width:600px;text-align:center;top:346.27px;font-size:7px;line-height:7px;color:#a9acb4;font-weight:400;">03:00</div>
<div class="t" style="left:114.70px;width:600px;text-align:center;top:346.27px;font-size:7px;line-height:7px;color:#a9acb4;font-weight:400;">06:00</div>
<div class="t" style="left:175.75px;width:600px;text-align:center;top:346.27px;font-size:7px;line-height:7px;color:#a9acb4;font-weight:400;">09:00</div>
<div class="t" style="left:236.80px;width:600px;text-align:center;top:346.27px;font-size:7px;line-height:7px;color:#a9acb4;font-weight:400;">12:00</div>
<div class="t" style="left:-2.40px;width:600px;text-align:center;top:356.92px;font-size:8.6px;line-height:8.6px;color:#b4b7be;font-weight:700;">timestamp per 30 minutes</div>
<div class="t" style="left:-17px;top:266.7px;width:60px;text-align:center;font-size:8.9px;line-height:8.9px;font-weight:700;color:#b4b7be;transform:rotate(-90deg);">Count</div>
<svg width="1108" height="488" viewBox="0 0 1108 488"><circle cx="555.2" cy="201.80" r="4" fill="#4a78d4"/><circle cx="555.2" cy="217.70" r="4" fill="#cf4a4a"/><circle cx="555.2" cy="233.60" r="4" fill="#45c2bd"/><circle cx="555.2" cy="249.50" r="4" fill="#8dc64a"/><circle cx="555.2" cy="265.40" r="4" fill="#7f4fd0"/><circle cx="555.2" cy="281.30" r="4" fill="#d04f86"/><circle cx="555.2" cy="297.20" r="4" fill="#3ec98a"/><circle cx="555.2" cy="313.10" r="4" fill="#c9c64a"/></svg>
<div class="t" style="left:563.50px;top:197.86px;font-size:8.2px;line-height:8.2px;color:#dfe3ea;font-weight:400;">3</div>
<div class="t" style="left:563.50px;top:213.76px;font-size:8.2px;line-height:8.2px;color:#dfe3ea;font-weight:400;">7</div>
<div class="t" style="left:563.50px;top:229.66px;font-size:8.2px;line-height:8.2px;color:#dfe3ea;font-weight:400;">5</div>
<div class="t" style="left:563.50px;top:245.56px;font-size:8.2px;line-height:8.2px;color:#dfe3ea;font-weight:400;">8</div>
<div class="t" style="left:563.50px;top:261.46px;font-size:8.2px;line-height:8.2px;color:#dfe3ea;font-weight:400;">4</div>
<div class="t" style="left:563.50px;top:277.36px;font-size:8.2px;line-height:8.2px;color:#dfe3ea;font-weight:400;">6</div>
<div class="t" style="left:563.50px;top:293.26px;font-size:8.2px;line-height:8.2px;color:#dfe3ea;font-weight:400;">9</div>
<div class="t" style="left:563.50px;top:309.16px;font-size:8.2px;line-height:8.2px;color:#dfe3ea;font-weight:400;">10</div>
<svg width="1108" height="488" viewBox="0 0 1108 488"><path d="M831.60,203.10 A78.2,78.2 0 1 1 788.44,216.09 L800.42,234.19 A56.5,56.5 0 1 0 831.60,224.80 Z" fill="#bb56b8" stroke="#1f2026" stroke-width="0.9"/><path d="M788.44,216.09 A78.2,78.2 0 0 1 809.65,206.24 L815.74,227.07 A56.5,56.5 0 0 0 800.42,234.19 Z" fill="#a53535" stroke="#1f2026" stroke-width="0.9"/><path d="M809.65,206.24 A78.2,78.2 0 0 1 818.02,204.29 L821.79,225.66 A56.5,56.5 0 0 0 815.74,227.07 Z" fill="#dca162" stroke="#1f2026" stroke-width="0.9"/><path d="M818.02,204.29 A78.2,78.2 0 0 1 822.75,203.60 L825.20,225.16 A56.5,56.5 0 0 0 821.79,225.66 Z" fill="#cdb944" stroke="#1f2026" stroke-width="0.9"/><path d="M822.75,203.60 A78.2,78.2 0 0 1 826.28,203.28 L827.76,224.93 A56.5,56.5 0 0 0 825.20,225.16 Z" fill="#4c69d2" stroke="#1f2026" stroke-width="0.9"/><path d="M826.28,203.28 A78.2,78.2 0 0 1 829.14,203.14 L829.83,224.83 A56.5,56.5 0 0 0 827.76,224.93 Z" fill="#d65a45" stroke="#1f2026" stroke-width="0.9"/></svg>
<div style="position:absolute;left:980px;top:185px;width:120px;height:190px;overflow:hidden;"><svg width="120" height="190" viewBox="980 185 120 190"><circle cx="997.9" cy="197.70" r="4.1" fill="#c45ac6"/><circle cx="997.9" cy="213.60" r="4.1" fill="#b03a3a"/><circle cx="997.9" cy="229.50" r="4.1" fill="#e0a060"/><circle cx="997.9" cy="245.40" r="4.1" fill="#cdb840"/><circle cx="997.9" cy="261.30" r="4.1" fill="#4a65d4"/><circle cx="997.9" cy="277.20" r="4.1" fill="#d65a45"/><circle cx="997.9" cy="293.10" r="4.1" fill="#44b5c8"/><circle cx="997.9" cy="309.00" r="4.1" fill="#6fc44a"/><circle cx="997.9" cy="324.90" r="4.1" fill="#9050d0"/><circle cx="997.9" cy="340.80" r="4.1" fill="#d050b0"/><circle cx="997.9" cy="356.70" r="4.1" fill="#40c070"/><circle cx="997.9" cy="372.60" r="4.1" fill="#d8a048"/></svg><div class="t" style="left:26.10px;top:8.50px;font-size:8.5px;line-height:8.5px;color:#d4d7dc;font-weight:400;">Stored Data Manipu...</div>
<div class="t" style="left:26.10px;top:24.40px;font-size:8.5px;line-height:8.5px;color:#d4d7dc;font-weight:400;">Disable or Modify T...</div>
<div class="t" style="left:26.10px;top:40.30px;font-size:8.5px;line-height:8.5px;color:#d4d7dc;font-weight:400;">Modify Registry</div>
<div class="t" style="left:26.10px;top:56.20px;font-size:8.5px;line-height:8.5px;color:#d4d7dc;font-weight:400;">Data Destruction</div>
<div class="t" style="left:26.10px;top:72.10px;font-size:8.5px;line-height:8.5px;color:#d4d7dc;font-weight:400;">File Deletion</div>
<div class="t" style="left:26.10px;top:88.00px;font-size:8.5px;line-height:8.5px;color:#d4d7dc;font-weight:400;">Valid Accounts</div>
<div class="t" style="left:26.10px;top:103.90px;font-size:8.5px;line-height:8.5px;color:#d4d7dc;font-weight:400;">Password Guessing</div>
<div class="t" style="left:26.10px;top:119.80px;font-size:8.5px;line-height:8.5px;color:#d4d7dc;font-weight:400;">SSH</div>
<div class="t" style="left:26.10px;top:135.70px;font-size:8.5px;line-height:8.5px;color:#d4d7dc;font-weight:400;">Brute Force</div>
<div class="t" style="left:26.10px;top:151.60px;font-size:8.5px;line-height:8.5px;color:#d4d7dc;font-weight:400;">Email Collection</div>
<div class="t" style="left:26.10px;top:167.50px;font-size:8.5px;line-height:8.5px;color:#d4d7dc;font-weight:400;">Service Stop</div>
<div class="t" style="left:26.10px;top:183.40px;font-size:8.5px;line-height:8.5px;color:#d4d7dc;font-weight:400;">Windows Service</div>
</div>
<svg width="1108" height="488" viewBox="0 0 1108 488"><path d="M112.70,440.00 A78.5,78.5 0 1 1 95.04,442.01 L100.15,464.13 A55.8,55.8 0 1 0 112.70,462.70 Z" fill="#57c17b" stroke="#1f2026" stroke-width="0.9"/><path d="M95.04,442.01 A78.5,78.5 0 0 1 104.49,440.43 L106.87,463.01 A55.8,55.8 0 0 0 100.15,464.13 Z" fill="#6f87d8" stroke="#1f2026" stroke-width="0.9"/><path d="M104.49,440.43 A78.5,78.5 0 0 1 112.01,440.00 L112.21,462.70 A55.8,55.8 0 0 0 106.87,463.01 Z" fill="#6c3fc2" stroke="#1f2026" stroke-width="0.9"/><circle cx="223.2" cy="433.80" r="4" fill="#57c17b"/><circle cx="998.1" cy="442.70" r="4" fill="#57c17b"/><circle cx="223.2" cy="449.70" r="4" fill="#6f87d8"/><circle cx="998.1" cy="458.60" r="4" fill="#6f87d8"/><circle cx="223.2" cy="465.60" r="4" fill="#6c3fc2"/><circle cx="998.1" cy="474.50" r="4" fill="#6c3fc2"/><rect x="380" y="441.3" width="1" height="50" fill="#a5a8b0"/><rect x="376" y="441.3" width="4" height="1" fill="#a5a8b0"/><rect x="376" y="446.00" width="4" height="1" fill="#a5a8b0"/><rect x="376" y="472.50" width="4" height="1" fill="#a5a8b0"/><rect x="381" y="441.3" width="8.5" height="50" fill="#2e2f35"/><rect x="914.8" y="475.6" width="10.6" height="20" fill="#6f87d8"/><rect x="927.1" y="451.7" width="10.8" height="40" fill="#6c3fc2"/><rect x="987" y="441.4" width="2" height="50" fill="#34353b"/></svg>
<div class="t" style="left:231.30px;top:429.87px;font-size:8.9px;line-height:8.9px;color:#d4d7dc;font-weight:400;">ip-172-31-7-252</div>
<div class="t" style="left:1005.90px;top:438.77px;font-size:8.9px;line-height:8.9px;color:#d4d7dc;font-weight:400;">ip-172-31-7-252</div>
<div class="t" style="left:231.30px;top:446.65px;font-size:7.85px;line-height:7.85px;color:#d4d7dc;font-weight:400;">AETOS</div>
<div class="t" style="left:1005.90px;top:455.55px;font-size:7.85px;line-height:7.85px;color:#d4d7dc;font-weight:400;">AETOS</div>
<div class="t" style="left:231.30px;top:462.34px;font-size:8.1px;line-height:8.1px;color:#d4d7dc;font-weight:400;">DESKTOP-STKOL43</div>
<div class="t" style="left:1005.90px;top:471.24px;font-size:8.1px;line-height:8.1px;color:#d4d7dc;font-weight:400;">DESKTOP-STKOL43</div>
<div class="t" style="left:-225.80px;width:600px;text-align:right;top:442.75px;font-size:7.5px;line-height:7.5px;color:#a9acb4;font-weight:400;">2,500</div>
<div class="t" style="left:-225.80px;width:600px;text-align:right;top:469.25px;font-size:7.5px;line-height:7.5px;color:#a9acb4;font-weight:400;">2,000</div>
</div></div>
</body></html>
